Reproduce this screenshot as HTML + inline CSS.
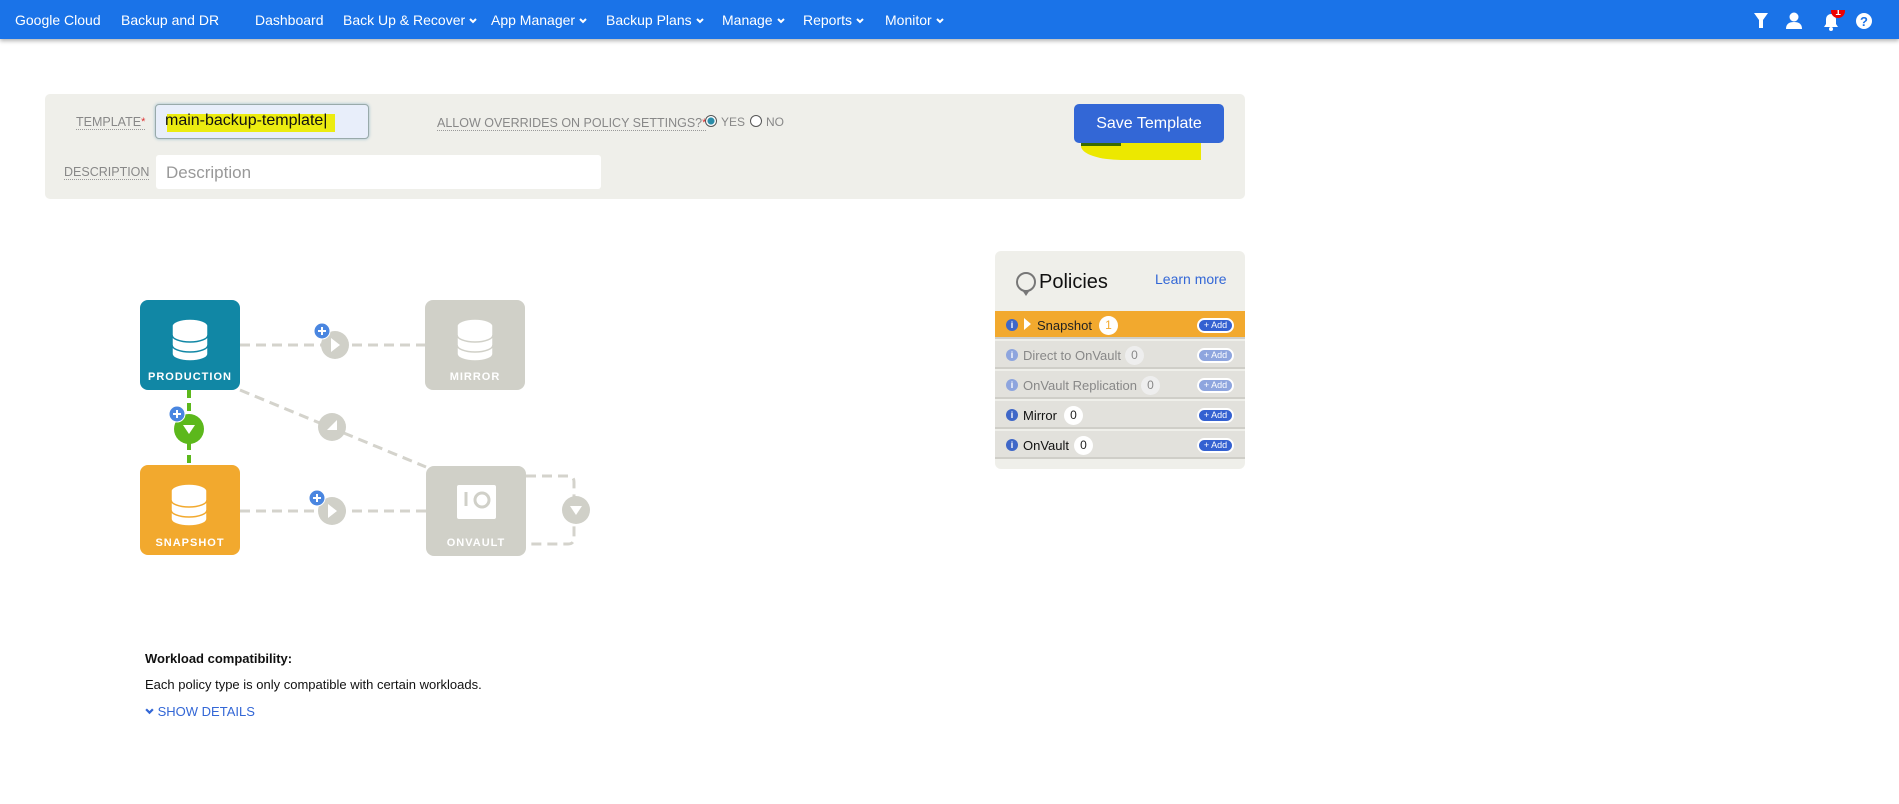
<!DOCTYPE html>
<html><head><meta charset="utf-8"><style>
*{box-sizing:border-box;margin:0;padding:0}
body{width:1899px;height:804px;background:#fff;font-family:"Liberation Sans",Arial,sans-serif;position:relative;overflow:hidden;color:#222}
.nav{position:absolute;left:0;top:0;width:1899px;height:39px;background:#1a73e8;box-shadow:0 2px 4px rgba(0,0,0,.3);color:#fff;font-size:14px}
.nav span{position:absolute;top:12px;white-space:nowrap}
.car{display:inline-block;width:8px;height:6px;margin-left:4px;vertical-align:1px}
.panel{position:absolute;left:45px;top:94px;width:1200px;height:105px;background:#efefea;border-radius:5px}
.lbl{position:absolute;font-size:12.5px;color:#888;border-bottom:1px dotted #999;line-height:14px}
.req{color:#d33;font-size:11px;vertical-align:top}
.abs{position:absolute}
.pol{position:absolute;left:995px;top:251px;width:250px;height:218px;background:#efefea;border-radius:6px;overflow:hidden}
.row{position:absolute;left:0;width:250px;height:28px;background:#e2e1dc;border-bottom:2px solid #cfcec8;font-size:13px}
.row .i{position:absolute;left:11px;top:8px;width:12px;height:12px;border-radius:50%;background:#3f67c8;color:#fff;font-size:9px;text-align:center;line-height:12px;font-weight:bold}
.row .t{position:absolute;top:7px}
.row .c{position:absolute;top:5px;width:19px;height:19px;border-radius:10px;background:#fff;text-align:center;line-height:19px;font-size:12px}
.row .a{position:absolute;left:202px;top:7px;width:37px;height:15px;border-radius:8px;background:#3461d1;border:2px solid #fff;color:#fff;font-size:9px;text-align:center;line-height:11px}
.dim{color:#888}.dim .i,.dim .a{background:#8ea5de}
</style></head><body>
<div class="nav">
<span style="left:15px">Google Cloud</span>
<span style="left:121px">Backup and DR</span>
<span style="left:255px">Dashboard</span>
<span style="left:343px">Back Up &amp; Recover<svg class="car" viewBox="0 0 8 6"><path d="M1 1l3 3 3-3" stroke="#fff" stroke-width="2" fill="none"/></svg></span>
<span style="left:491px">App Manager<svg class="car" viewBox="0 0 8 6"><path d="M1 1l3 3 3-3" stroke="#fff" stroke-width="2" fill="none"/></svg></span>
<span style="left:606px">Backup Plans<svg class="car" viewBox="0 0 8 6"><path d="M1 1l3 3 3-3" stroke="#fff" stroke-width="2" fill="none"/></svg></span>
<span style="left:722px">Manage<svg class="car" viewBox="0 0 8 6"><path d="M1 1l3 3 3-3" stroke="#fff" stroke-width="2" fill="none"/></svg></span>
<span style="left:803px">Reports<svg class="car" viewBox="0 0 8 6"><path d="M1 1l3 3 3-3" stroke="#fff" stroke-width="2" fill="none"/></svg></span>
<span style="left:885px">Monitor<svg class="car" viewBox="0 0 8 6"><path d="M1 1l3 3 3-3" stroke="#fff" stroke-width="2" fill="none"/></svg></span>
<svg class="abs" style="left:1754px;top:10px" width="130" height="22" viewBox="0 0 130 22">
<path d="M0 3h14l-5 7v8h-4v-8z" fill="#fff"/>
<circle cx="40" cy="7" r="4.5" fill="#fff"/><path d="M32 19c0-5 3-7 8-7s8 2 8 7z" fill="#fff"/>
<path d="M70 17h14l-2-3v-5a5 5 0 0 0-10 0v5z" fill="#fff"/><circle cx="77" cy="19" r="2" fill="#fff"/>
<circle cx="84" cy="1" r="7" fill="#e00"/><text x="84" y="5" font-size="10" font-weight="bold" fill="#fff" text-anchor="middle" font-family="Liberation Sans">1</text>
<circle cx="110" cy="11" r="8" fill="#fff"/><text x="110" y="16" font-size="13" font-weight="bold" fill="#1a73e8" text-anchor="middle" font-family="Liberation Sans">?</text>
</svg>
</div>

<div class="panel">
<div class="lbl" style="left:31px;top:21px">TEMPLATE<span class="req">*</span></div>
<div class="abs" style="left:110px;top:10px;width:214px;height:35px;background:#e8eefa;border:1px solid #9aa;border-radius:4px;box-shadow:0 0 3px #9bc"></div>
<div class="abs" style="left:122px;top:20px;width:168px;height:18px;background:#ecec10"></div>
<div class="abs" style="left:120px;top:18px;font-size:16px;color:#111">main-backup-template|</div>
<div class="lbl" style="left:19px;top:71px">DESCRIPTION</div>
<div class="abs" style="left:111px;top:61px;width:445px;height:34px;background:#fff;border-radius:3px;font-size:17px;color:#999;padding:8px 10px">Description</div>
<div class="lbl" style="left:392px;top:22px">ALLOW OVERRIDES ON POLICY SETTINGS?<span class="req">*</span></div>
<div class="abs" style="left:660px;top:21px;width:12px;height:12px;border-radius:50%;border:1px solid #555;background:radial-gradient(#2a8ca8 45%,#fff 55%)"></div>
<div class="abs" style="left:676px;top:21px;font-size:12px;color:#888">YES</div>
<div class="abs" style="left:705px;top:21px;width:12px;height:12px;border-radius:50%;border:1px solid #555;background:#fff"></div>
<div class="abs" style="left:721px;top:21px;font-size:12px;color:#888">NO</div>
<div class="abs" style="left:1036px;top:46px;width:120px;height:20px;background:#ece800;border-radius:0 0 0 40px/0 0 0 14px"></div>
<div class="abs" style="left:1036px;top:46px;width:40px;height:6px;background:#3a6a00"></div>
<div class="abs" style="left:1029px;top:10px;width:150px;height:39px;background:#3367d6;border-radius:5px;color:#fff;font-size:16px;text-align:center;line-height:39px">Save Template</div>
</div>

<svg class="abs" style="left:0;top:250px" width="700" height="330" viewBox="0 250 700 330">
<g stroke="#d4d3cc" stroke-width="3" stroke-dasharray="10 6" fill="none">
<path d="M240 345H425"/><path d="M240 390L426 467"/><path d="M240 511H426"/>
<path d="M526 476h42q6 0 6 6v56q0 6-6 6h-42"/>
</g>
<path d="M189 390V465" stroke="#5cb81c" stroke-width="4" stroke-dasharray="8 5"/>
<rect x="140" y="300" width="100" height="90" rx="8" fill="#1187a5"/>
<rect x="425" y="300" width="100" height="90" rx="8" fill="#d0d0c8"/>
<rect x="140" y="465" width="100" height="90" rx="8" fill="#f2a92e"/>
<rect x="426" y="466" width="100" height="90" rx="8" fill="#d0d0c8"/>
<g fill="#fff" stroke-width="1.5">
<g stroke="#1187a5"><ellipse cx="190" cy="326" rx="18" ry="7"/><path d="M172 326v28a18 7 0 0 0 36 0v-28"/><path d="M172 335a18 7 0 0 0 36 0M172 345a18 7 0 0 0 36 0" fill="none"/></g>
<g stroke="#d0d0c8"><ellipse cx="475" cy="326" rx="18" ry="7"/><path d="M457 326v28a18 7 0 0 0 36 0v-28"/><path d="M457 335a18 7 0 0 0 36 0M457 345a18 7 0 0 0 36 0" fill="none"/></g>
<g stroke="#f2a92e"><ellipse cx="189" cy="491" rx="18" ry="7"/><path d="M171 491v28a18 7 0 0 0 36 0v-28"/><path d="M171 500a18 7 0 0 0 36 0M171 510a18 7 0 0 0 36 0" fill="none"/></g>
</g>
<rect x="457" y="485" width="39" height="34" rx="2" fill="#fff"/>
<circle cx="482" cy="500" r="7" fill="none" stroke="#d0d0c8" stroke-width="3"/><path d="M466 492v14" stroke="#d0d0c8" stroke-width="3"/>
<g font-family="Liberation Sans" font-weight="bold" font-size="11" fill="#fff" text-anchor="middle" letter-spacing="1">
<text x="190" y="380">PRODUCTION</text><text x="475" y="380">MIRROR</text><text x="190" y="546">SNAPSHOT</text><text x="476" y="546">ONVAULT</text></g>
<g fill="#d0d0c8"><circle cx="335" cy="345" r="14"/><circle cx="332" cy="427" r="14"/><circle cx="332" cy="511" r="14"/><circle cx="576" cy="510" r="14"/></g>
<g fill="#fff"><path d="M331 338l9 7-9 7z"/><path d="M328 504l9 7-9 7z"/><path d="M337 420l-10 10h10z"/><path d="M570 506h12l-6 9z"/></g>
<circle cx="189" cy="429" r="15" fill="#5cb81c"/><path d="M183 425h12l-6 9z" fill="#fff"/>
<g fill="#4a86e0" stroke="#fff" stroke-width="1"><circle cx="322" cy="331" r="8"/><circle cx="177" cy="414" r="8"/><circle cx="317" cy="498" r="8"/></g>
<g stroke="#fff" stroke-width="2"><path d="M318 331h8M322 327v8M173 414h8M177 410v8M313 498h8M317 494v8"/></g>
</svg>

<div class="pol">
<svg class="abs" style="left:20px;top:20px" width="22" height="28" viewBox="0 0 22 28"><circle cx="11" cy="11" r="9" fill="none" stroke="#777" stroke-width="2"/><path d="M7 19l4 6 4-6" fill="#777"/></svg>
<div class="abs" style="left:44px;top:20px;font-size:20px;color:#111">Policies</div>
<div class="abs" style="left:160px;top:20px;font-size:14px;color:#3367d6">Learn more</div>
<div class="row" style="top:60px;background:#f2a92e"><div class="i">i</div><div class="abs" style="left:29px;top:7px;width:0;height:0;border-left:7px solid #fff;border-top:6px solid transparent;border-bottom:6px solid transparent"></div><div class="t" style="left:42px">Snapshot</div><div class="c" style="left:104px;color:#f2a92e">1</div><div class="a">+ Add</div></div>
<div class="row dim" style="top:90px"><div class="i">i</div><div class="t" style="left:28px">Direct to OnVault</div><div class="c" style="left:130px;background:#eee">0</div><div class="a">+ Add</div></div>
<div class="row dim" style="top:120px"><div class="i">i</div><div class="t" style="left:28px">OnVault Replication</div><div class="c" style="left:146px;background:#eee">0</div><div class="a">+ Add</div></div>
<div class="row" style="top:150px"><div class="i">i</div><div class="t" style="left:28px;color:#111">Mirror</div><div class="c" style="left:69px">0</div><div class="a">+ Add</div></div>
<div class="row" style="top:180px"><div class="i">i</div><div class="t" style="left:28px;color:#111">OnVault</div><div class="c" style="left:79px">0</div><div class="a">+ Add</div></div>
</div>

<div class="abs" style="left:145px;top:651px;font-size:13px;font-weight:bold;color:#111">Workload compatibility:</div>
<div class="abs" style="left:145px;top:677px;font-size:13px;color:#111">Each policy type is only compatible with certain workloads.</div>
<div class="abs" style="left:145px;top:704px;font-size:13px;color:#3367d6"><svg width="9" height="7" viewBox="0 0 8 6" style="vertical-align:1px"><path d="M1 1l3 3 3-3" stroke="#3367d6" stroke-width="2" fill="none"/></svg> SHOW DETAILS</div>
</body></html>
